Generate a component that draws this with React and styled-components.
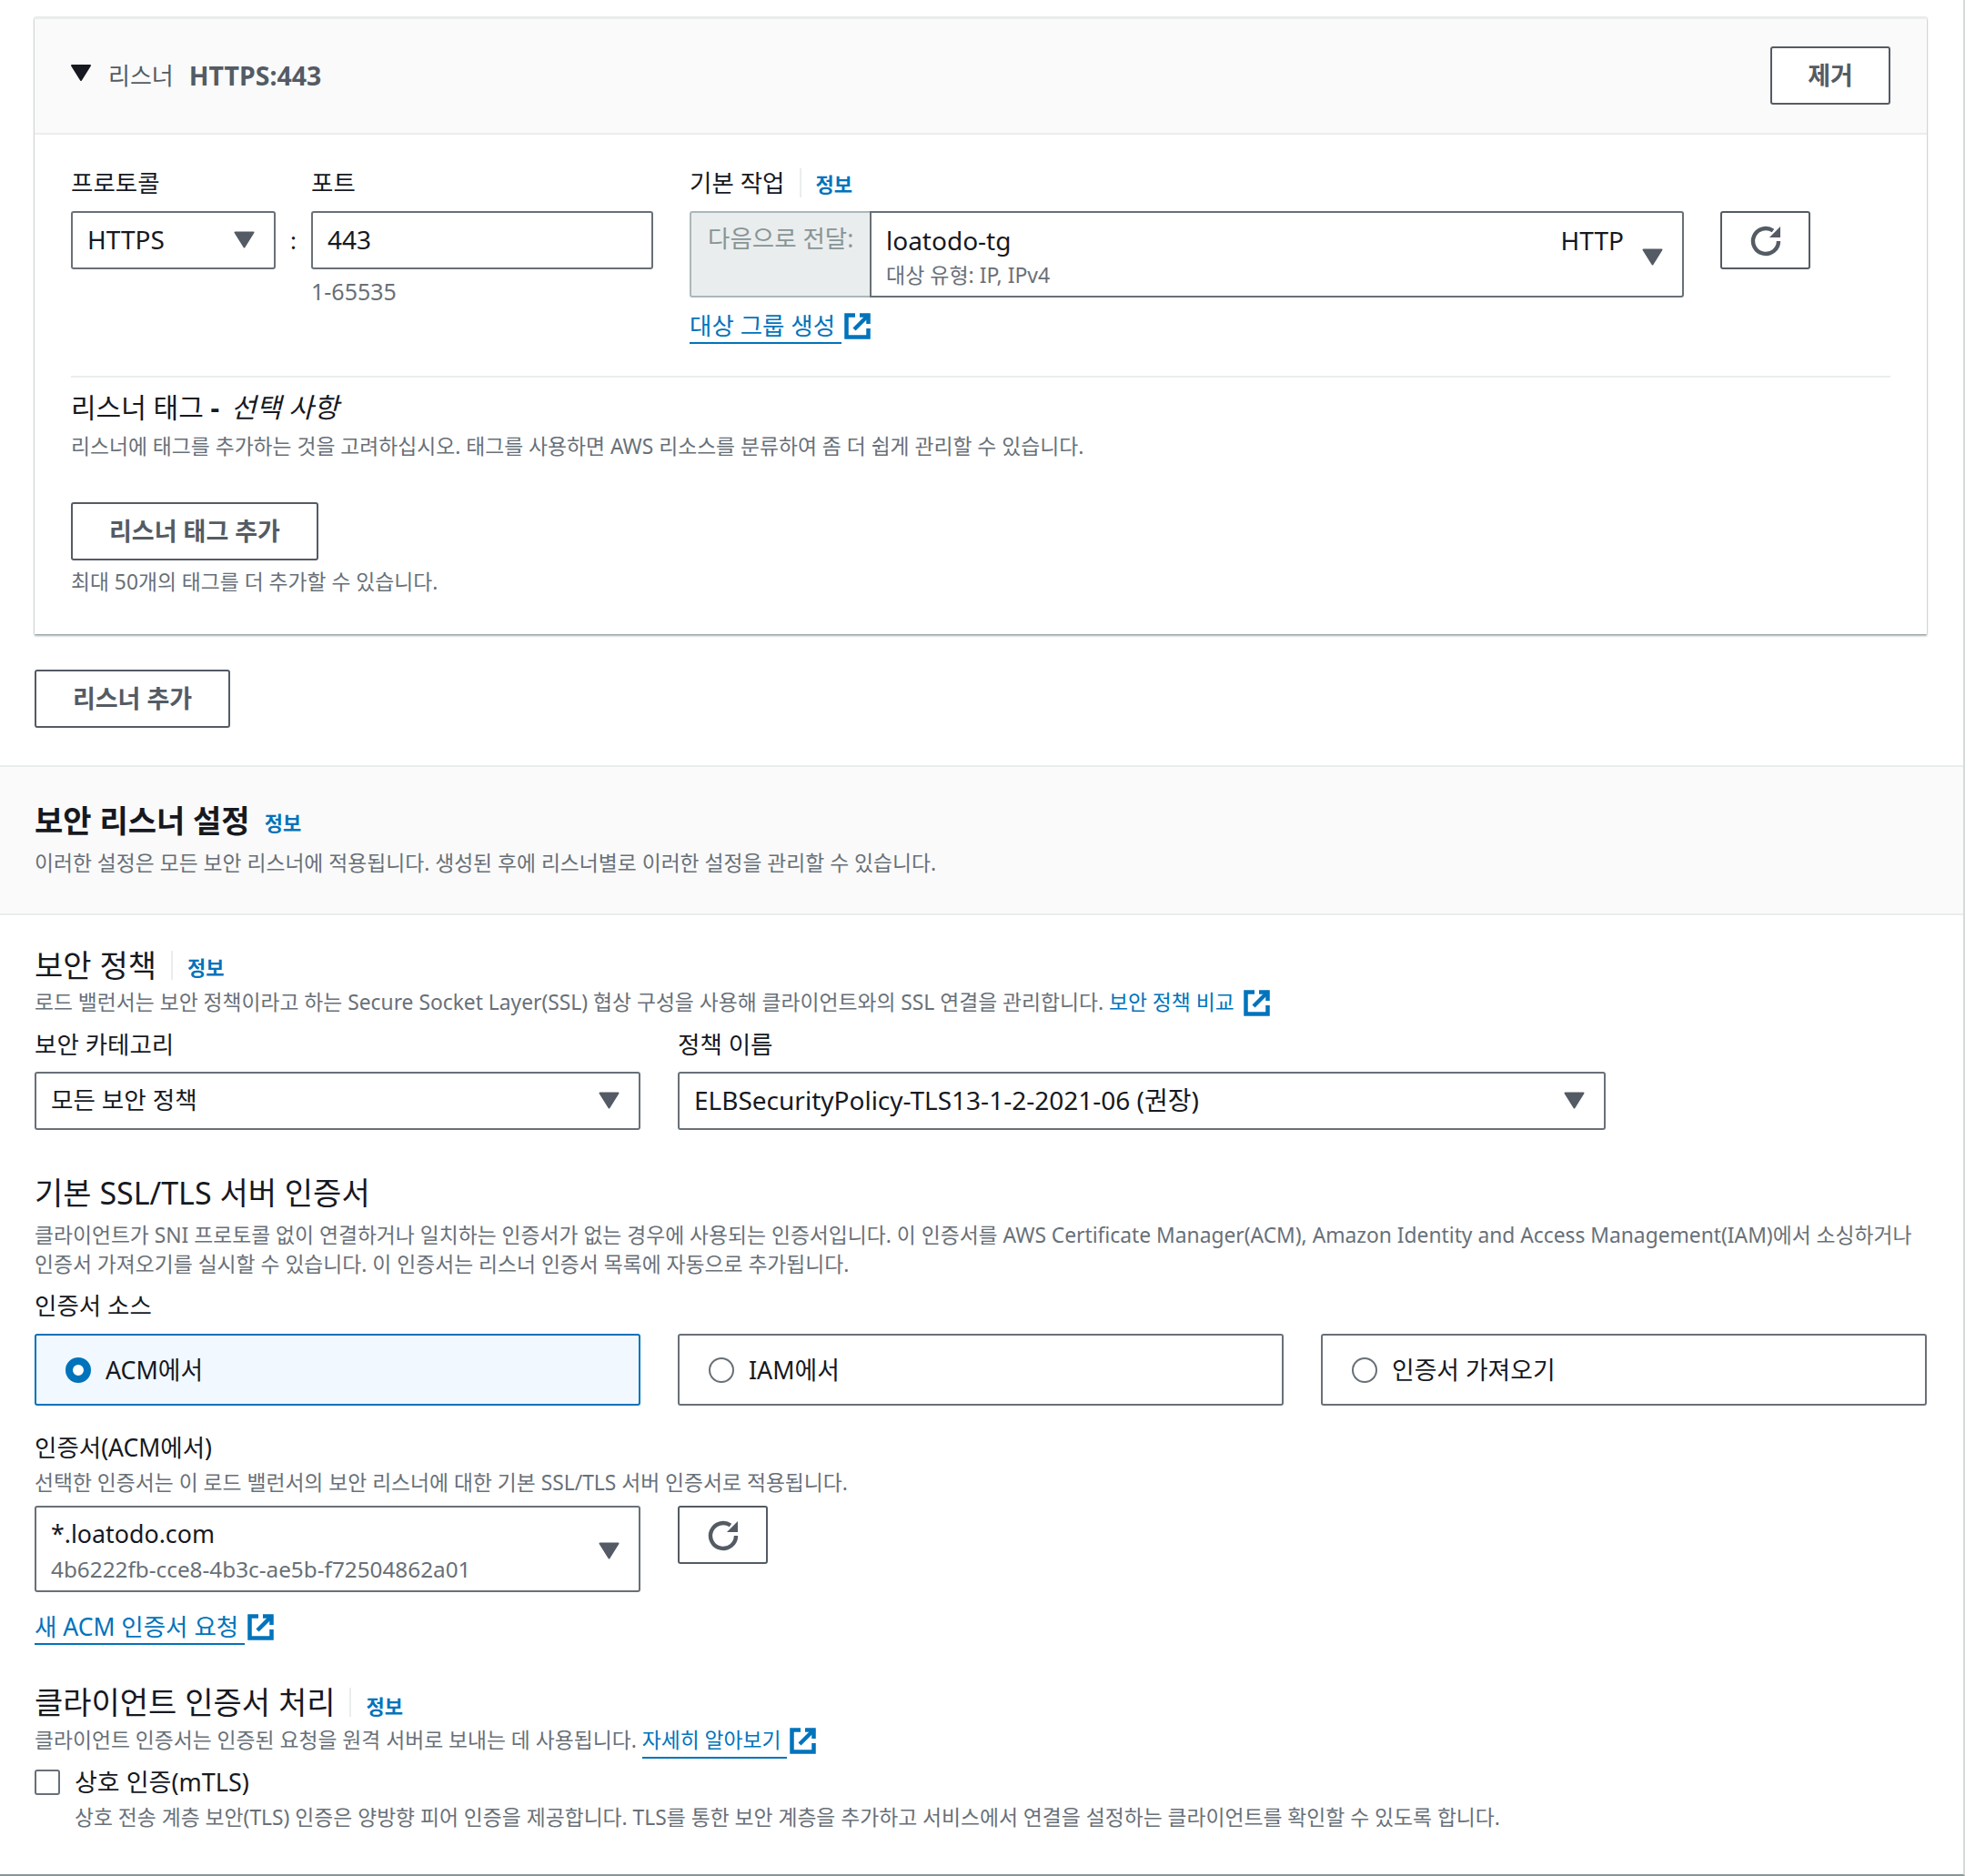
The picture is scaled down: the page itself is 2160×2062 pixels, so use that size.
import React from 'react';
import styled, { createGlobalStyle } from 'styled-components';

const Global = createGlobalStyle`
  html, body { margin: 0; padding: 0; background: #fff; }
  body { font-family: "Noto Sans", "Noto Sans CJK KR", sans-serif; color: #16191f; font-size: 26px; line-height: 32px; }
`;
const Page = styled.div`width: 2160px; height: 2062px; overflow: hidden; box-sizing: border-box; border-bottom: 2px solid #879596; border-right: 2px solid #d5dbdb;`;
const Inset = styled.div`padding: 0 40px 0 38px;`;
const Card = styled.section`margin-top: 19px; border-top: 2px solid #eaeded; box-shadow: 0 2px 2px rgba(0,28,36,.35), 0 0 2px rgba(0,28,36,.25); height: 678px; box-sizing: border-box;`;
const CardHead = styled.header`height: 127px; box-sizing: border-box; background: #fafafa; border-bottom: 2px solid #eaeded; display: flex; align-items: center; justify-content: space-between; padding: 0 40px 2px;`;
const HeadLeft = styled.div`display: flex; align-items: center; font-size: 26px; color: #545b64;`;
const HeadValue = styled.strong`font-weight: 700; font-size: 28.5px; margin-left: 17px; color: #545b64;`;
const HeadTri = styled.svg`width: 22px; height: 18px; margin-right: 19px; margin-top: -6px; fill: #16191f;`;
const Button = styled.button`
  box-sizing: border-box; height: 64px; width: ${p => p.$w}px; border: 2px solid #545b64; border-radius: 3px;
  background: #fff; color: #545b64; font: 700 27px/32px "Noto Sans", "Noto Sans CJK KR", sans-serif; padding: 0;
  display: flex; align-items: center; justify-content: center;
`;
const CardBody = styled.div`padding: 33px 40px 0;`;
const TopRow = styled.div`display: flex; align-items: flex-start;`;
const Field = styled.div`display: flex; flex-direction: column; width: ${p => p.$w ? p.$w + 'px' : 'auto'}; margin-left: ${p => p.$ml || 0}px; padding-top: ${p => p.$pt || 0}px;`;
const Label = styled.div`font-size: 26.5px; line-height: 32px; height: 32px; color: #16191f; display: flex; align-items: flex-start; margin-top: ${p => p.$t || 0}px;`;
const TopLabel = styled(Label)`height: 51px; padding-top: 4px; box-sizing: border-box;`;
const Divider = styled.span`width: 2px; height: 32px; background: #eaeded; margin: 0 ${p => p.$r || 16}px 0 ${p => p.$l || 16}px;`;
const Info = styled.a`color: #0073bb; font-size: 22px; font-weight: 700; line-height: 32px; position: relative; top: ${p => p.$top ?? 2}px;`;
const Select = styled.div`
  box-sizing: border-box; height: 64px; width: 100%;
  border: 2px solid #687078; border-radius: 3px; background: #fff; display: flex; align-items: center;
  justify-content: space-between; padding: 0 21px 2px 16px; font-size: ${p => p.$s || 28}px;
`;
const TallSelect = styled.div`
  box-sizing: border-box; height: 95px; width: ${p => p.$w}px; border: 2px solid #687078; border-radius: 3px; background: #fff;
  display: flex; justify-content: space-between; align-items: flex-start; padding: 11px 21px 0 16px;
`;
const Tri = styled.svg`width: 23px; height: 19px; fill: #545b64; flex: none; margin-left: ${p => p.$l || 0}px; margin-top: ${p => p.$t || 0}px;`;
const Colon = styled.span`width: 39px; text-align: center; padding-top: 67px; font-size: 26px; color: #16191f;`;
const Hint = styled.div`color: #687078; font-size: ${p => p.$s || 25}px; line-height: 30px; margin-top: ${p => p.$t ?? 9}px;`;
const ForwardRow = styled.div`display: flex; width: 1093px;`;
const Forward = styled.div`box-sizing: border-box; width: 198px; height: 95px; background: #eaeded; border: 2px solid #aab7b8; border-right: 0; border-radius: 3px 0 0 3px; color: #879596; font-size: 26.5px; line-height: 32px; padding: 12px 0 0 18px; white-space: nowrap;`;
const ActionSelect = styled.div`box-sizing: border-box; flex: 1; height: 95px; border: 2px solid #687078; border-radius: 0 3px 3px 0; padding: 12px 21px 0 16px; display: flex; justify-content: space-between;`;
const Stack = styled.div`display: flex; flex-direction: column;`;
const MainValue = styled.div`font-size: ${p => p.$s || 28}px; line-height: 36px; color: #16191f;`;
const SubValue = styled.div`font-size: ${p => p.$s || 24.3}px; line-height: 36px; margin-top: ${p => p.$t ?? 2}px; color: #687078;`;
const Right = styled.div`display: flex; align-items: flex-start;`;
const ExtLink = styled.a`display: inline-flex; align-items: flex-start; color: #0073bb; font-size: ${p => p.$s || 26.5}px; line-height: 32px; margin-top: ${p => p.$t || 0}px; vertical-align: ${p => p.$inline ? 'top' : 'baseline'};`;
const LinkText = styled.span`border-bottom: 2px solid #0073bb; padding: 0 7px 2px 0;`;
const PlainLink = styled.span`padding-right: 7px;`;
const ExtIcon = styled.svg`width: 30px; height: 30px; margin-left: 3px; margin-top: 1px; fill: none; stroke: #0073bb; stroke-width: 4.5;`;
const Rule = styled.hr`border: 0; height: 2px; background: #eaeded; margin: 35px 0 0;`;
const SubHead = styled.h3`margin: 15px 0 0; font-size: 30px; line-height: 36px; font-weight: 400; em { font-style: italic; margin-left: 5px; }`;
const Dash = styled.b`font-weight: 700;`;
const Desc = styled.p`margin: ${p => p.$t || 0}px 0 0; color: #687078; font-size: 22.8px; line-height: 32px; white-space: nowrap; padding-left: ${p => p.$pl || 0}px;`;
const AddWrap = styled.div`margin-top: 39px;`;
const TagWrap = styled.div`margin-top: 45px;`;
const Band = styled.section`margin-top: 41px; height: 165px; box-sizing: border-box; background: #fafafa; border-top: 2px solid #eaeded; border-bottom: 2px solid #eaeded; padding: 37px 38px 0;`;
const BandTitle = styled.h2`margin: 0; font-size: 34px; line-height: 44px; font-weight: 700; display: flex; align-items: center; gap: 16px;`;
const H = styled.h3`margin: ${p => p.$t}px 0 0; font-size: 34px; line-height: 44px; font-weight: 400; display: flex; align-items: center; color: #16191f;`;
const FieldRow = styled.div`display: grid; grid-template-columns: 666px 1020px; gap: 41px; margin-top: ${p => p.$t || 0}px;`;
const Tiles = styled.div`display: grid; grid-template-columns: repeat(3, 666px); gap: 41px; margin-top: 15px;`;
const Tile = styled.div`
  box-sizing: border-box; height: 79px; border: 2px solid ${p => p.$on ? '#0073bb' : '#687078'}; border-radius: 3px;
  background: ${p => p.$on ? '#f1f8ff' : '#fff'}; display: flex; align-items: center; padding-left: 32px; font-size: 26.8px; gap: 16px;
`;
const Radio = styled.span`box-sizing: border-box; width: 28px; height: 28px; border-radius: 50%; border: ${p => p.$on ? '8px solid #0073bb' : '2px solid #687078'}; background: #fff;`;
const CertRow = styled.div`display: flex; gap: 41px; margin-top: 9px; align-items: flex-start;`;
const Check = styled.span`display: block; box-sizing: border-box; width: 28px; height: 28px; border: 2px solid #687078; border-radius: 3px; flex: none;`;
const CheckRow = styled.div`display: flex; align-items: center; gap: 16px; margin-top: 6px; font-size: 27px; line-height: 40px;`;
const Refresh = styled.svg`width: 36px; height: 36px;`;

const TriPath = () => <path d="M1.5 1.5h20L11.5 17.5z" stroke="#545b64" strokeWidth="2" strokeLinejoin="round" />;
const Triangle = () => <Tri viewBox="0 0 23 19"><TriPath /></Tri>;
const External = () => <ExtIcon viewBox="0 0 30 30"><path d="M12 3.5H2.5v24h24V18" /><path d="M27 3 11 19" /><path d="M17 3.5h9.5V13" /></ExtIcon>;
const RefreshIcon = () => (
  <Refresh viewBox="0 0 36 36">
    <path d="M26 7.5A14 14 0 1 0 32 19" fill="none" stroke="#545b64" strokeWidth="4.4" />
    <path d="M34 3v12H22z" fill="#545b64" />
  </Refresh>
);

export default function App() {
  return (
    <Page>
      <Global />
      <Inset>
        <Card>
          <CardHead>
            <HeadLeft>
              <HeadTri viewBox="0 0 22 18"><path d="M1 1h20L11 17z" stroke="#16191f" strokeWidth="2" strokeLinejoin="round" /></HeadTri>
              리스너<HeadValue>HTTPS:443</HeadValue>
            </HeadLeft>
            <Button $w={132}>제거</Button>
          </CardHead>
          <CardBody>
            <TopRow>
              <Field $w={225}>
                <TopLabel>프로토콜</TopLabel>
                <Select>HTTPS<Triangle /></Select>
              </Field>
              <Colon>:</Colon>
              <Field $w={376}>
                <TopLabel>포트</TopLabel>
                <Select>443</Select>
                <Hint>1-65535</Hint>
              </Field>
              <Field $w={1093} $ml={40}>
                <TopLabel>기본 작업<Divider $l={17} $r={15} /><Info $top={1}>정보</Info></TopLabel>
                <ForwardRow>
                  <Forward>다음으로 전달:</Forward>
                  <ActionSelect>
                    <Stack><MainValue>loatodo-tg</MainValue><SubValue $s={23}>대상 유형: IP, IPv4</SubValue></Stack>
                    <Right>
                      <MainValue>HTTP</MainValue>
                      <Tri $l={20} $t={27} viewBox="0 0 23 19"><TriPath /></Tri>
                    </Right>
                  </ActionSelect>
                </ForwardRow>
                <ExtLink $t={15}><LinkText>대상 그룹 생성 </LinkText><External /></ExtLink>
              </Field>
              <Field $ml={40} $pt={51}>
                <Button $w={99}><RefreshIcon /></Button>
              </Field>
            </TopRow>
            <Rule />
            <SubHead>리스너 태그 <Dash>-</Dash> <em>선택 사항</em></SubHead>
            <Desc $t={9}>리스너에 태그를 추가하는 것을 고려하십시오. 태그를 사용하면 AWS 리소스를 분류하여 좀 더 쉽게 관리할 수 있습니다.</Desc>
            <TagWrap><Button $w={272}>리스너 태그 추가</Button></TagWrap>
            <Hint $s={22.8} $t={9}>최대 50개의 태그를 더 추가할 수 있습니다.</Hint>
          </CardBody>
        </Card>
        <AddWrap><Button $w={215}>리스너 추가</Button></AddWrap>
      </Inset>
      <Band>
        <BandTitle>보안 리스너 설정<Info>정보</Info></BandTitle>
        <Desc $t={9}>이러한 설정은 모든 보안 리스너에 적용됩니다. 생성된 후에 리스너별로 이러한 설정을 관리할 수 있습니다.</Desc>
      </Band>
      <Inset>
        <H $t={33}>보안 정책<Divider $l={16} $r={16} /><Info>정보</Info></H>
        <Desc $t={3}>로드 밸런서는 보안 정책이라고 하는 Secure Socket Layer(SSL) 협상 구성을 사용해 클라이언트와의 SSL 연결을 관리합니다. <ExtLink $inline $s={22.8}><PlainLink>보안 정책 비교</PlainLink><External /></ExtLink></Desc>
        <FieldRow $t={14}>
          <Label>보안 카테고리</Label>
          <Label>정책 이름</Label>
        </FieldRow>
        <FieldRow $t={14}>
          <Select $s={26.6}>모든 보안 정책<Triangle /></Select>
          <Select>ELBSecurityPolicy-TLS13-1-2-2021-06 (권장)<Triangle /></Select>
        </FieldRow>
        <H $t={47}>기본 SSL/TLS 서버 인증서</H>
        <Desc $t={9}>클라이언트가 SNI 프로토콜 없이 연결하거나 일치하는 인증서가 없는 경우에 사용되는 인증서입니다. 이 인증서를 AWS Certificate Manager(ACM), Amazon Identity and Access Management(IAM)에서 소싱하거나<br />인증서 가져오기를 실시할 수 있습니다. 이 인증서는 리스너 인증서 목록에 자동으로 추가됩니다.</Desc>
        <Label $t={13}>인증서 소스</Label>
        <Tiles>
          <Tile $on><Radio $on />ACM에서</Tile>
          <Tile><Radio />IAM에서</Tile>
          <Tile><Radio />인증서 가져오기</Tile>
        </Tiles>
        <Label $t={30}>인증서(ACM에서)</Label>
        <Desc $t={7}>선택한 인증서는 이 로드 밸런서의 보안 리스너에 대한 기본 SSL/TLS 서버 인증서로 적용됩니다.</Desc>
        <CertRow>
          <TallSelect $w={666}>
            <Stack><MainValue $s={26.8}>*.loatodo.com</MainValue><SubValue $t={3}>4b6222fb-cce8-4b3c-ae5b-f72504862a01</SubValue></Stack>
            <Tri $t={27} viewBox="0 0 23 19"><TriPath /></Tri>
          </TallSelect>
          <Button $w={99}><RefreshIcon /></Button>
        </CertRow>
        <ExtLink $t={22}><LinkText>새 ACM 인증서 요청 </LinkText><External /></ExtLink>
        <H $t={41}>클라이언트 인증서 처리<Divider $l={16} $r={16} /><Info $top={4}>정보</Info></H>
        <Desc $t={4}>클라이언트 인증서는 인증된 요청을 원격 서버로 보내는 데 사용됩니다. <ExtLink $inline $s={22.8}><LinkText>자세히 알아보기</LinkText><External /></ExtLink></Desc>
        <CheckRow><Check />상호 인증(mTLS)</CheckRow>
        <Desc $t={3} $pl={44}>상호 전송 계층 보안(TLS) 인증은 양방향 피어 인증을 제공합니다. TLS를 통한 보안 계층을 추가하고 서비스에서 연결을 설정하는 클라이언트를 확인할 수 있도록 합니다.</Desc>
      </Inset>
    </Page>
  );
}
